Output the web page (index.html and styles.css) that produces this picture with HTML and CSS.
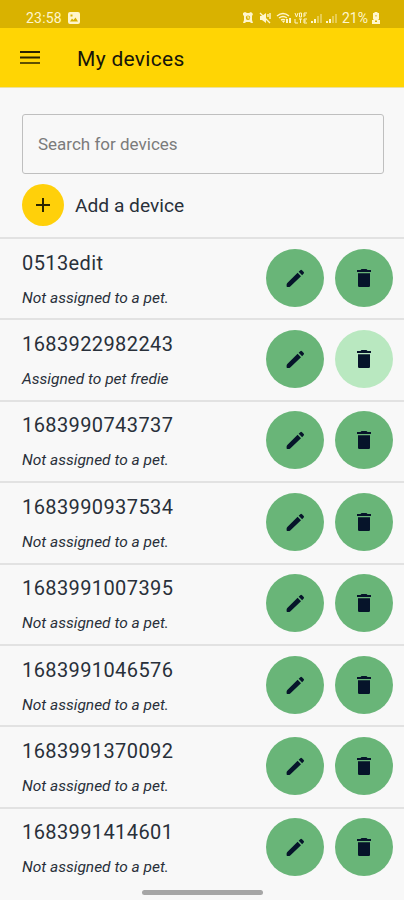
FILE: index.html
```
<!DOCTYPE html>
<html lang="en">
<head>
<meta charset="utf-8">
<title>My devices</title>
<link rel="stylesheet" href="styles.css">
</head>
<body>
<svg width="0" height="0" class="defs">
  <symbol id="pencil" viewBox="0 0 24 24"><path d="M14.600 6.800 18 10.200 7.500 20.200Q6.600 21.100 5.400 21.100H4.300Q3.600 21.100 3.600 20.300V18.800Q3.500 17.700 4.300 16.900ZM15.700 5.800 17.300 4.200Q18.100 3.400 19 4.200L20.700 5.900Q21.500 6.800 20.700 7.600L19.100 9.200Z"/></symbol>
  <symbol id="trash" viewBox="0 0 24 24"><path d="M6 7.200H18V19.800Q18 21 16.800 21H7.200Q6 21 6 19.800ZM5 4H8.500L9.500 3H14.500L15.500 4H19V6H5Z"/></symbol>
</svg>
<header>
  <div class="status">
    <span class="time">23:58</span>
    <svg class="picture" viewBox="0 0 12 12"><path fill-rule="evenodd" d="M2 0H10Q12 0 12 2V10Q12 12 10 12H2Q0 12 0 10V2Q0 0 2 0ZM2 9.500H10L7.500 5.500 5.500 8 4 6.500ZM2.500 2.500V4.500H4.500V2.500Z"/></svg>
    <svg class="indicators" viewBox="0 0 96 14">
      <path fill-rule="evenodd" d="M1 2 3 1 5 2H7L9 1 11 3 10 5V9L11 12H9L8 11H4L3 12H1L2 9V5L1 4ZM6 4.500A2.200 2.200 0 1 0 6 8.900A2.200 2.200 0 1 0 6 4.500ZM5.500 5H6.500V6.500H7.500V7.500H5.500Z"/>
      <path d="M18 5H20L24 2V12L20 9H18Z"/><path class="line" d="M18 2 28 12M26 3V6M28 2V8"/>
      <path class="line" d="M35 5Q41 0 47 5M37 7Q41 4 45 7M39 9Q41 8 43 9"/><path d="M40 10H43L41.500 12ZM44 8H46V12H44ZM47 7H49V12H47Z"/>
      <path class="line thin" d="M53 2 54.500 6 56 2M57.500 2H59.500V6H57.500ZM62 6V2H65M62 4H64M53 8V12H56M57 8H60M58.500 8V12M62 8H65M62 10H64M62 8V12H65"/>
      <path d="M69 10H71V12H69ZM72 8H74V12H72Z"/><path class="faint" d="M75 5H77V12H75ZM78 3H80V12H78Z"/>
      <path d="M84 10H86V12H84ZM87 8H89V12H87Z"/><path class="faint" d="M90 5H92V12H90ZM93 3H95V12H93Z"/>
    </svg>
    <span class="percent">21%</span>
    <svg class="battery" viewBox="0 0 8 12"><path fill-rule="evenodd" d="M2.500 0H5.500V1H7V7L6 8H8V12H0V8H2L1 7V1H2.500ZM3.500 3V4.500H4.500V3ZM3 8.500V10H5V8.500Z"/></svg>
  </div>
  <div class="bar">
    <svg class="menu" viewBox="0 0 20 14"><path d="M0 0H20V2H0ZM0 5.500H20V7.500H0Z"/><path class="soft" d="M0 11H20V13H0Z"/></svg>
    <h1>My devices</h1>
  </div>
</header>
<main>
  <input class="search" type="text" placeholder="Search for devices">
  <div class="add">
    <button class="plus" aria-label="Add"><svg viewBox="0 0 16 16"><path d="M7 1H9V7H15V9H9V15H7V9H1V7H7Z"/></svg></button>
    <span>Add a device</span>
  </div>
  <ul>
    <li><div class="info"><h2>0513edit</h2><p>Not assigned to a pet.</p></div><button class="round"><svg><use href="#pencil"/></svg></button><button class="round"><svg><use href="#trash"/></svg></button></li>
    <li><div class="info"><h2>1683922982243</h2><p>Assigned to pet fredie</p></div><button class="round"><svg><use href="#pencil"/></svg></button><button class="round off"><svg><use href="#trash"/></svg></button></li>
    <li><div class="info"><h2>1683990743737</h2><p>Not assigned to a pet.</p></div><button class="round"><svg><use href="#pencil"/></svg></button><button class="round"><svg><use href="#trash"/></svg></button></li>
    <li><div class="info"><h2>1683990937534</h2><p>Not assigned to a pet.</p></div><button class="round"><svg><use href="#pencil"/></svg></button><button class="round"><svg><use href="#trash"/></svg></button></li>
    <li><div class="info"><h2>1683991007395</h2><p>Not assigned to a pet.</p></div><button class="round"><svg><use href="#pencil"/></svg></button><button class="round"><svg><use href="#trash"/></svg></button></li>
    <li><div class="info"><h2>1683991046576</h2><p>Not assigned to a pet.</p></div><button class="round"><svg><use href="#pencil"/></svg></button><button class="round"><svg><use href="#trash"/></svg></button></li>
    <li><div class="info"><h2>1683991370092</h2><p>Not assigned to a pet.</p></div><button class="round"><svg><use href="#pencil"/></svg></button><button class="round"><svg><use href="#trash"/></svg></button></li>
    <li><div class="info"><h2>1683991414601</h2><p>Not assigned to a pet.</p></div><button class="round"><svg><use href="#pencil"/></svg></button><button class="round"><svg><use href="#trash"/></svg></button></li>
  </ul>
</main>
<div class="home"></div>
</body>
</html>
```
FILE: styles.css
```
* { box-sizing: border-box; margin: 0; padding: 0; }
html, body { height: 900px; overflow: hidden; }
body { background: #f8f8f8; color: #29303a; font-family: Roboto, sans-serif; position: relative; }
button { border: 0; display: flex; align-items: center; justify-content: center; border-radius: 50%; flex: none; }
.defs { position: absolute; }
.status { height: 28px; background: #d9b200; display: flex; align-items: center; padding: 7px 24px 0 26px; color: #fff6cc; fill: #fff6cc; font-size: 14px; }
.time { width: 37px; letter-spacing: 0.2px; }
.picture { width: 12px; height: 12px; margin-left: 5px; }
.indicators { width: 96px; height: 14px; margin-left: auto; }
.line { fill: none; stroke: #fff6cc; stroke-width: 1.4; }
.thin { stroke-width: 1; }
.faint { opacity: 0.4; }
.percent { margin-left: 4px; width: 27px; }
.battery { width: 8px; height: 12px; margin-left: 3px; }
.bar { height: 60px; background: #ffd504; display: flex; align-items: center; padding: 2px 20px 0; border-bottom: 1px solid #ebe1a0; }
.menu { width: 20px; height: 14px; fill: #2a2400; margin-top: -1px; }
.soft { opacity: 0.75; }
h1 { font-size: 21px; font-weight: 450; color: #16150a; margin-left: 37px; letter-spacing: 0.3px; }
.search { display: block; width: 362px; height: 60px; margin: 26px 0 0 22px; border: 1.5px solid #bfbfbf; border-radius: 3px; background: transparent; padding: 0 15px; font: 17px Roboto, sans-serif; color: #222; }
.search::placeholder { color: #7b7b7b; opacity: 1; }
.add { display: flex; align-items: center; gap: 11px; margin: 10px 0 11px 22px; font-size: 19.2px; height: 42px; }
.add span { padding-top: 1px; }
.plus { width: 42px; height: 42px; background: #ffd00a; }
.plus svg { width: 16px; height: 16px; fill: #2a2400; }
ul { list-style: none; }
li { height: 81.4px; display: flex; align-items: center; border-top: 2px solid #e2e2e2; padding: 0 11px 2px 22px; gap: 11px; }
.info { flex: 1; padding-top: 3px; }
h2 { font-size: 20px; line-height: 24px; font-weight: 400; letter-spacing: 0.4px; }
p { font-size: 15.5px; line-height: 20px; font-style: italic; margin-top: 13px; }
.round { width: 58px; height: 58px; background: #69b578; }
.off { background: #b9e8c0; }
.round svg { width: 24px; height: 24px; fill: #06142a; }
.home { position: absolute; left: 142px; top: 890px; width: 121px; height: 5px; border-radius: 3px; background: #a6a6a6; }
```
